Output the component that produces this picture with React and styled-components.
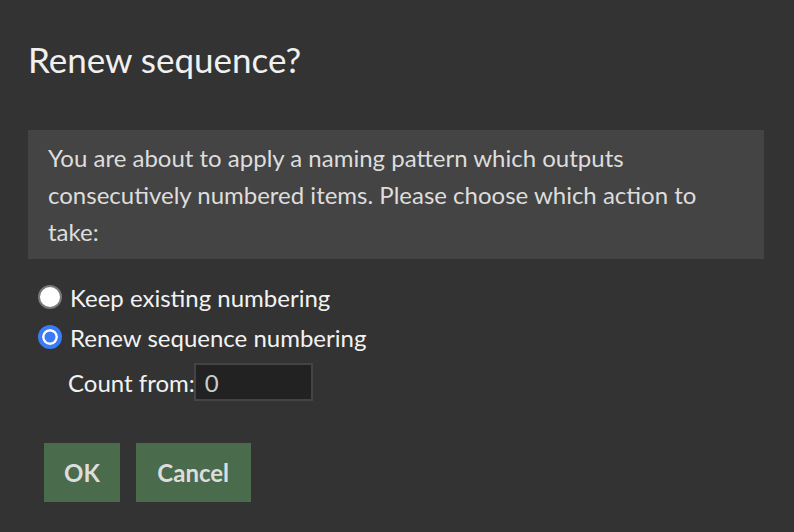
import React from 'react';
import styled, { createGlobalStyle } from 'styled-components';

const Global = createGlobalStyle`
html, body {
  margin: 0;
  padding: 0;
  background: #333333;
}
body {
  font-family: Lato, "Open Sans", sans-serif;
  color: #dddddd;
}
`

const Dialog = styled.div`
width: 794px;
height: 532px;
box-sizing: border-box;
padding: 30px 30px 0 28px;
background: #333333;
`

const Title = styled.h1`
margin: 0;
font-size: 35px;
font-weight: 400;
line-height: 58px;
color: #f0f0f0;
`

const Notice = styled.div`
margin-top: 42px;
background: #444444;
padding: 9px 20px 9px 20px;
font-size: 24px;
line-height: 37px;
color: #dddddd;
`

const Options = styled.div`
margin-top: 18px;
display: flex;
flex-direction: column;
padding-left: 10px;
`

const OptionRow = styled.label`
display: flex;
align-items: center;
gap: 8px;
height: 40px;
font-size: 24px;
color: #f2f2f2;
`

const Radio = styled.span`
width: 24px;
height: 24px;
box-sizing: border-box;
border-radius: 50%;
flex-shrink: 0;
background: ${p => (p.$checked ? '#3b7bf5' : '#ffffff')};
border: ${p => (p.$checked ? '4px solid #3b7bf5' : '2px solid #7a7a7a')};
box-shadow: ${p => (p.$checked ? 'inset 0 0 0 2.5px #ffffff' : 'none')};
`

const CountRow = styled.div`
display: flex;
align-items: center;
margin-top: 6px;
padding-left: 30px;
font-size: 24px;
color: #f2f2f2;
`

const CountInput = styled.div`
width: 119px;
height: 38px;
margin-left: -1px;
box-sizing: border-box;
background: #222222;
border: 2px solid #444444;
padding-left: 9px;
display: flex;
align-items: center;
font-size: 24px;
color: #cccccc;
`

const Buttons = styled.div`
display: flex;
gap: 16px;
margin-top: 42px;
padding-left: 16px;
`

const Button = styled.button`
height: 59px;
padding: 0 ${p => p.$pad}px;
border: none;
background: #4a6b4c;
color: #dddddd;
font-family: Lato, "Open Sans", sans-serif;
font-weight: 700;
font-size: 24px;
cursor: pointer;
`

export default function App() {
  return (
    <Dialog>
      <Global />
      <Title>Renew sequence?</Title>
      <Notice>
        You are about to apply a naming pattern which outputs<br />
        consecutively numbered items. Please choose which action to<br />
        take:
      </Notice>
      <Options>
        <OptionRow>
          <Radio />
          Keep existing numbering
        </OptionRow>
        <OptionRow>
          <Radio $checked />
          Renew sequence numbering
        </OptionRow>
        <CountRow>
          Count from:
          <CountInput>0</CountInput>
        </CountRow>
      </Options>
      <Buttons>
        <Button $pad={20}>OK</Button>
        <Button $pad={21.5}>Cancel</Button>
      </Buttons>
    </Dialog>
  );
}
